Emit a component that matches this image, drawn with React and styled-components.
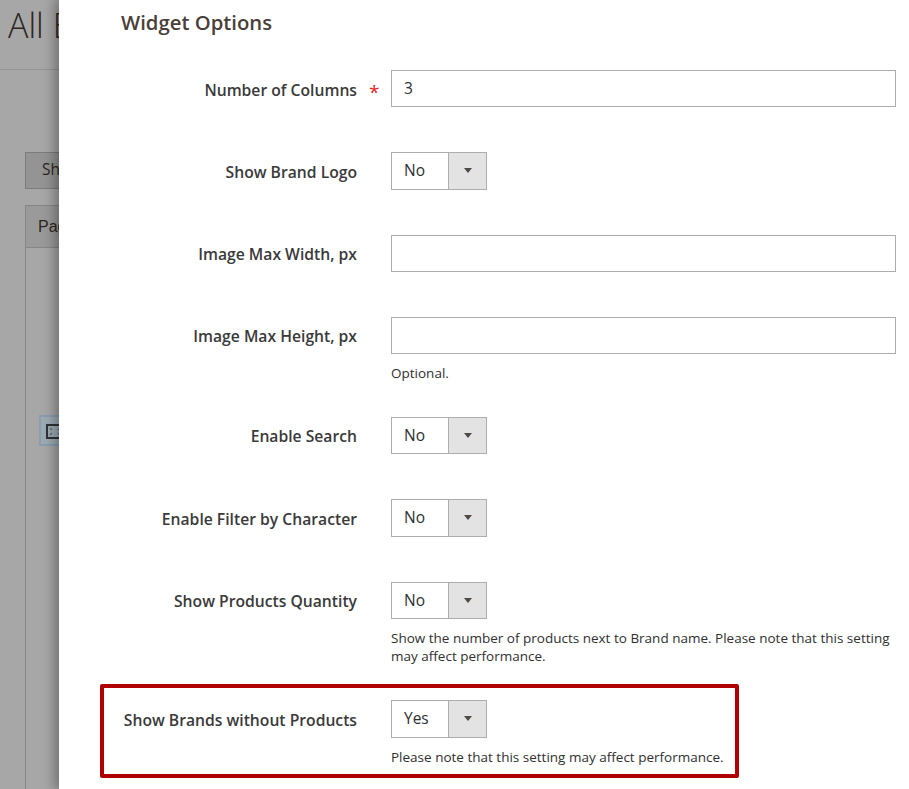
import React from "react";
import styled, { createGlobalStyle } from "styled-components";

const Global = createGlobalStyle`
  html, body { margin: 0; padding: 0; background: #a7a7a7; }
  body { width: 909px; height: 789px; overflow: hidden; font-family: "Open Sans", sans-serif; }
`;
const Page = styled.div`
  position: relative;
  width: 909px;
  height: 789px;
  overflow: hidden;
  background: #a7a7a7;
`;
const PageHeader = styled.header`
  height: 70px;
  border-bottom: 1px solid #949494;
  box-sizing: border-box;
  padding: 0 0 0 8px;
`;
const PageTitle = styled.h1`
  margin: 0;
  font-size: 34px;
  line-height: 50px;
  font-weight: 300;
  color: #2c2622;
  white-space: nowrap;
`;
const Background = styled.div`
  padding: 82px 0 0 25px;
`;
const GhostButton = styled.div`
  width: 80px;
  height: 37px;
  box-sizing: border-box;
  border: 1px solid #7c7c7c;
  background: #949494;
  color: #2c2622;
  font-size: 15.5px;
  font-weight: 500;
  line-height: 32px;
  padding-left: 16px;
`;
const GhostTable = styled.div`
  margin-top: 16px;
  height: 600px;
  border-left: 1px solid #868686;
  border-top: 1px solid #868686;
`;
const GhostHead = styled.div`
  height: 41px;
  background: #9a9a9a;
  border-bottom: 1px solid #868686;
  font-family: "Liberation Sans", sans-serif;
  font-size: 16px;
  line-height: 42px;
  color: #2c2622;
  padding-left: 12px;
`;
const Thumb = styled.div`
  margin: 167px 0 0 13px;
  width: 32px;
  height: 31px;
  box-sizing: border-box;
  background: #9dabb3;
  border: 2px solid #8b9dae;
  padding: 7px 5px;
  display: flex;
`;
const Panel = styled.section`
  position: absolute;
  left: 59px;
  top: 0;
  width: 850px;
  height: 789px;
  background: #fff;
  box-shadow: -2px 0 12px 2px rgba(0, 0, 0, 0.35);
  box-sizing: border-box;
  padding: 0 13px 0 62px;
`;
const PanelTitle = styled.h2`
  margin: 0;
  height: 70px;
  padding-top: 8px;
  box-sizing: border-box;
  font-size: 20.3px;
  line-height: 28px;
  font-weight: 600;
  color: #4a3f38;
`;
const Row = styled.div`
  position: relative;
  display: grid;
  grid-template-columns: 236px 34px 1fr;
  margin-bottom: 45px;
`;
const Label = styled.label`
  font-size: 15.7px;
  font-weight: 600;
  color: #3a3a3a;
  text-align: right;
  line-height: 20px;
  padding-top: 9.5px;
  white-space: nowrap;
`;
const Star = styled.span`
  color: #e22626;
  font-size: 19px;
  font-weight: 400;
  padding: 10px 0 0 12px;
  line-height: 24px;
`;
const TextInput = styled.div`
  width: 505px;
  height: 37px;
  box-sizing: border-box;
  border: 1px solid #adadad;
  background: #fff;
  color: #303030;
  font-size: 15.5px;
  line-height: 34px;
  padding-left: 12px;
`;
const Select = styled.div`
  display: flex;
  width: 96px;
  height: 37.5px;
  box-sizing: border-box;
  border: 1px solid #adadad;
  background: #fff;
`;
const SelectValue = styled.span`
  flex: 1;
  color: #303030;
  font-size: 15.5px;
  line-height: 34px;
  padding-left: 12px;
`;
const SelectArrow = styled.span`
  width: 37px;
  display: flex;
  align-items: center;
  justify-content: center;
  background: #e3e3e3;
  border-left: 1px solid #adadad;
  &::after {
    content: "";
    border-left: 4px solid transparent;
    border-right: 4px solid transparent;
    border-top: 5px solid #514943;
  }
`;
const Note = styled.p`
  margin: 10.2px 0 -10.2px;
  color: #303030;
  font-size: 13.5px;
  line-height: 18px;
  width: 505px;
`;
const Highlight = styled.div`
  position: absolute;
  left: -21px;
  top: -16px;
  width: 639px;
  height: 94px;
  box-sizing: border-box;
  border: 4px solid #b00000;
  border-radius: 2px;
  pointer-events: none;
`;

const fields = [
  { label: "Number of Columns", type: "input", value: "3", required: true },
  { label: "Show Brand Logo", type: "select", value: "No" },
  { label: "Image Max Width, px", type: "input", value: "" },
  { label: "Image Max Height, px", type: "input", value: "", note: "Optional." },
  { label: "Enable Search", type: "select", value: "No" },
  { label: "Enable Filter by Character", type: "select", value: "No" },
  {
    label: "Show Products Quantity",
    type: "select",
    value: "No",
    note: "Show the number of products next to Brand name. Please note that this setting may affect performance.",
  },
  {
    label: "Show Brands without Products",
    type: "select",
    value: "Yes",
    note: "Please note that this setting may affect performance.",
    highlight: true,
  },
];

export default function App() {
  return (
    <Page>
      <Global />
      <PageHeader>
        <PageTitle>All Brands</PageTitle>
      </PageHeader>
      <Background>
        <GhostButton>Show</GhostButton>
        <GhostTable>
          <GhostHead>Page</GhostHead>
          <Thumb>
            <svg width="18" height="15" viewBox="0 0 18 15" fill="none">
              <rect x="1" y="1" width="16" height="13" stroke="#2f3336" strokeWidth="2" />
              <path d="M4 4l2 2M14 4l-2 2M4 11l2-2M14 11l-2-2" stroke="#5f6a70" strokeWidth="1.5" />
            </svg>
          </Thumb>
        </GhostTable>
      </Background>
      <Panel>
        <PanelTitle>Widget Options</PanelTitle>
        {fields.map((f) => (
          <Row key={f.label}>
            <Label>{f.label}</Label>
            <Star>{f.required ? "*" : ""}</Star>
            <div>
              {f.type === "input" ? (
                <TextInput>{f.value}</TextInput>
              ) : (
                <Select>
                  <SelectValue>{f.value}</SelectValue>
                  <SelectArrow />
                </Select>
              )}
              {f.note && <Note>{f.note}</Note>}
            </div>
            {f.highlight && <Highlight />}
          </Row>
        ))}
      </Panel>
    </Page>
  );
}
